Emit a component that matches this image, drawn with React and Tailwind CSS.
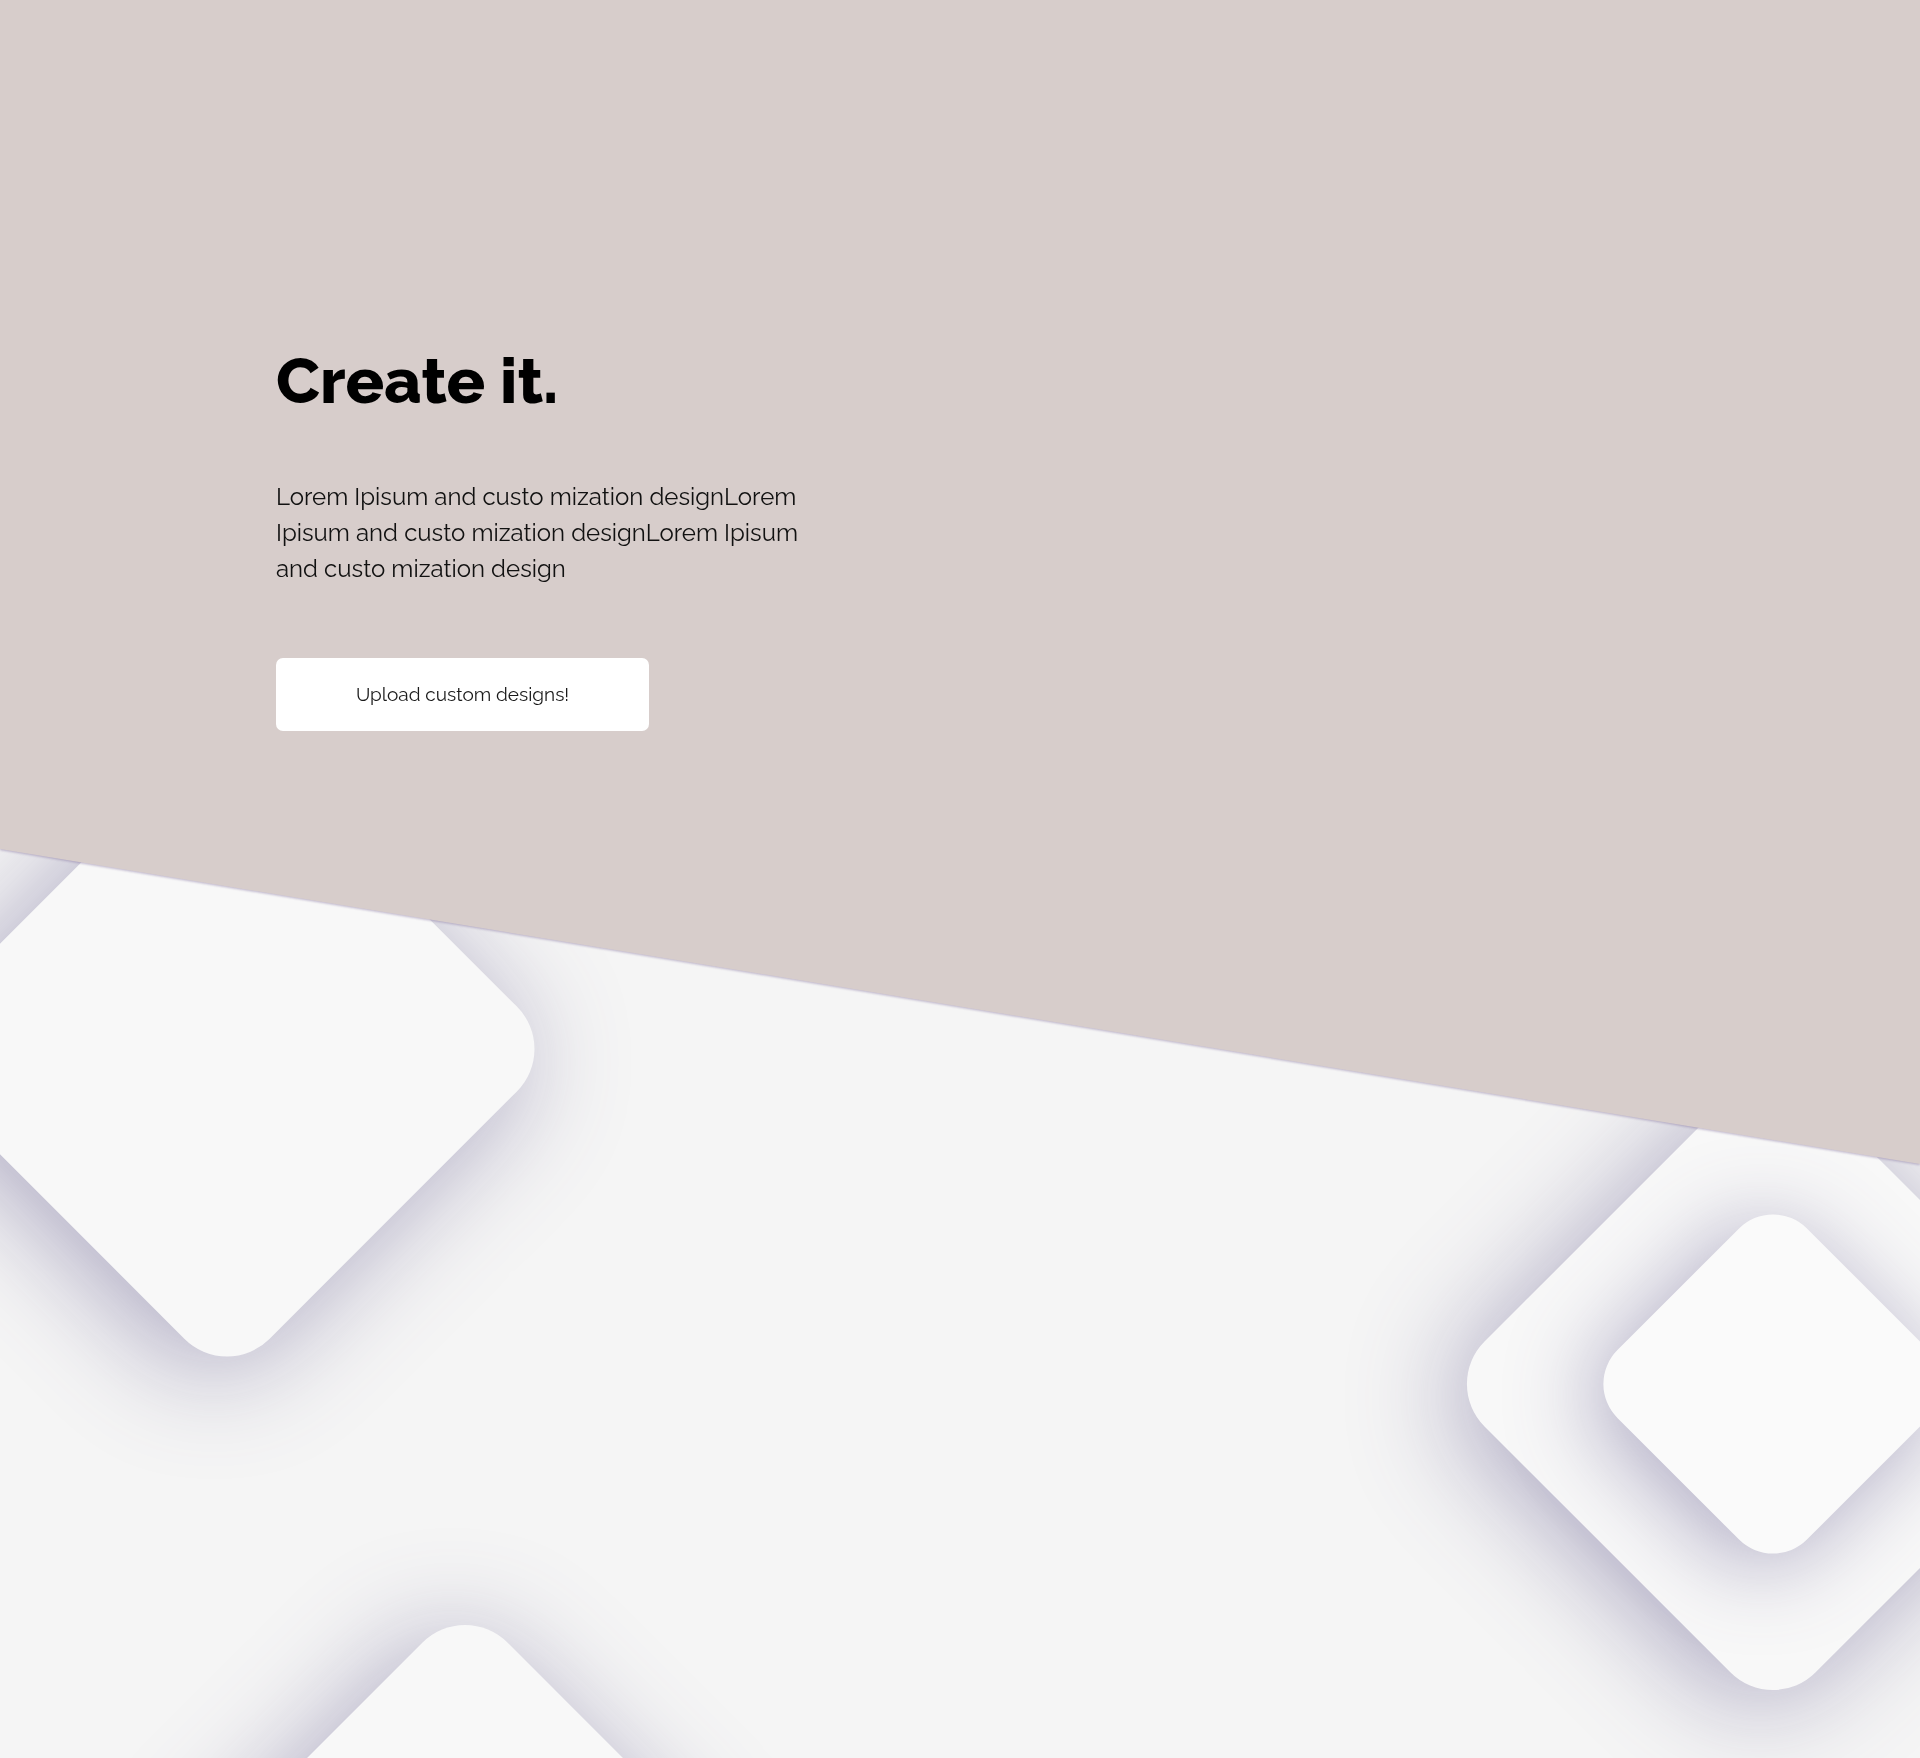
import React from 'react';

const font = { fontFamily: '"Raleway", Lato, "Open Sans", sans-serif' };

function Tile({ className }) {
  return (
    <div
      className={`absolute rotate-45 rounded-[60px] bg-[#f8f8f8] shadow-[0_18px_110px_rgba(85,75,130,0.45)] ${className}`}
    />
  );
}

export default function App() {
  return (
    <div className="relative h-[1758px] w-full overflow-hidden bg-[#f5f5f5]" style={font}>
      {/* Background tiles */}
      <Tile className="left-[-8px] top-[814px] h-[470px] w-[470px]" />
      <Tile className="left-[1539px] top-[1150px] h-[468px] w-[468px] bg-[#f6f6f6]" />
      <div className="absolute left-[1639px] top-[1250px] h-[268px] w-[268px] rotate-45 rounded-[48px] bg-[#fafafa] shadow-[0_16px_90px_rgba(85,75,130,0.45)]" />
      <Tile className="left-[231px] top-[1697px] h-[468px] w-[468px]" />

      {/* Hero */}
      <div className="absolute inset-x-0 top-0 z-10 drop-shadow-[0_1px_1px_rgba(120,100,150,0.45)]">
        <section className="flex h-[1164px] flex-col items-start bg-[#d7cdcb] pl-[276px] pt-[343px] [clip-path:polygon(0_0,100%_0,100%_100%,0_849px)]">
          <h1 className="text-[64px] font-extrabold leading-[1.2] text-black">Create it.</h1>
          <p className="mt-[59px] w-[560px] text-[24px] leading-[36px] text-[#111]">
            Lorem Ipisum and custo mization designLorem Ipisum and custo mization designLorem Ipisum and custo mization design
          </p>
          <button className="mt-[71px] flex h-[73px] w-[373px] items-center justify-center rounded-[7px] bg-white text-[19px] text-[#1a1a1a]">
            Upload custom designs!
          </button>
        </section>
      </div>
    </div>
  );
}
